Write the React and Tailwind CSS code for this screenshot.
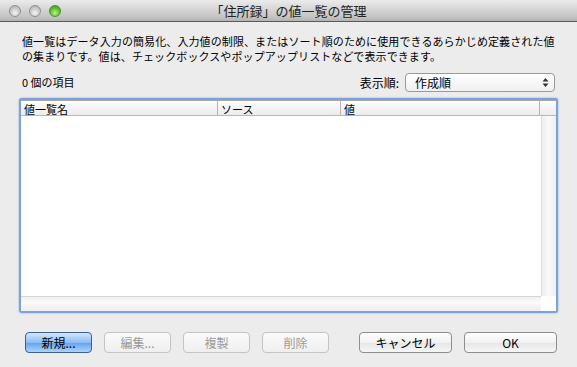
import React from 'react';

const font = { fontFamily: '"Lucida Grande", "Noto Sans CJK JP", "Liberation Sans", sans-serif' };

const TrafficLight = ({ green }) => (
  <span
    className={`block w-[12px] h-[12px] rounded-full border ${
      green
        ? 'border-[#4e8f2f] bg-[radial-gradient(circle_at_50%_70%,#b9f28a,#5cbf2a_55%,#3b8a1d)]'
        : 'border-[#8f8f8f] bg-[radial-gradient(circle_at_50%_70%,#f4f4f4,#c9c9c9_55%,#a9a9a9)]'
    }`}
  />
);

const Button = ({ children, w = 'w-[67px]', primary, disabled }) => (
  <button
    className={`${w} h-[21px] rounded-[4px] border text-[12px] leading-none flex items-center justify-center ${
      primary
        ? 'border-[#3f5f95] bg-[linear-gradient(#d2e6fd,#8cbdf4_50%,#62a2ee_51%,#a9d4fb)] text-black'
        : disabled
        ? 'border-[#c4c4c4] bg-[linear-gradient(#fafafa,#efefef)] text-[#9a9a9a]'
        : 'border-[#8e8e8e] bg-[linear-gradient(#ffffff,#f1f1f1_50%,#e6e6e6_51%,#f6f6f6)] text-black'
    }`}
  >
    {children}
  </button>
);

export default function App() {
  return (
    <div className="w-[577px] h-[367px] bg-[#ececec] flex flex-col overflow-hidden" style={font}>
      {/* title bar */}
      <div className="h-[22px] shrink-0 flex items-center relative bg-[linear-gradient(#ebebeb,#c4c4c4_80%,#b3b3b3)] border-b border-[#5a5a5a]">
        <div className="flex gap-[8px] pl-[9px]">
          <TrafficLight />
          <TrafficLight />
          <TrafficLight green />
        </div>
        <div className="absolute inset-0 flex items-center justify-center text-[13px] text-[#222]">
          「住所録」の値一覧の管理
        </div>
      </div>

      <div className="flex-1 flex flex-col px-[19px]">
        <p className="pl-[3px] pt-[12px] text-[11px] leading-[15px] text-black tracking-[0.1px]">
          値一覧はデータ入力の簡易化、入力値の制限、またはソート順のために使用できるあらかじめ定義された値
          <br />
          の集まりです。値は、チェックボックスやポップアップリストなどで表示できます。
        </p>

        <div className="flex items-center justify-between mt-[9px] pl-[3px] pr-[3px]">
          <span className="text-[11px]">0 個の項目</span>
          <div className="flex items-center gap-[6px]">
            <span className="text-[12px]">表示順:</span>
            <div className="w-[150px] h-[19px] rounded-[4px] border border-[#9a9a9a] bg-[linear-gradient(#ffffff,#f0f0f0)] flex items-center justify-between pl-[9px] pr-[5px]">
              <span className="text-[12px]">作成順</span>
              <svg width="7" height="11" viewBox="0 0 7 11">
                <path d="M3.5 1 L6.5 4.5 H0.5 Z" fill="#333" />
                <path d="M3.5 10 L6.5 6.5 H0.5 Z" fill="#333" />
              </svg>
            </div>
          </div>
        </div>

        {/* table */}
        <div className="mt-[6px] h-[215px] rounded-[3px] border-[2px] border-[#7ca3d8] shadow-[0_0_2px_#7ca3d8] bg-white flex flex-col">
          <div className="h-[16px] shrink-0 flex text-[11px] leading-[16px] bg-[linear-gradient(#fdfdfd,#ececec)] border-b border-[#b9b9b9] border-t border-t-[#a8a8a8]">
            <div className="w-[197px] pl-[3px] border-r border-[#b5b5b5]">値一覧名</div>
            <div className="w-[123px] pl-[3px] border-r border-[#b5b5b5]">ソース</div>
            <div className="w-[199px] pl-[3px] border-r border-[#b5b5b5]">値</div>
            <div className="flex-1" />
          </div>
          <div className="flex-1 flex">
            <div className="flex-1 flex flex-col">
              <div className="flex-1" />
              <div className="h-[15px] border-t border-[#d6d6d6] bg-[linear-gradient(#f0f0f0,#fbfbfb_40%,#ededed)]" />
            </div>
            <div className="w-[15px] flex flex-col">
              <div className="flex-1 border-l border-[#dedede] bg-[linear-gradient(90deg,#eeeeee,#fafafa_50%,#eeeeee)]" />
              <div className="h-[15px] bg-white" />
            </div>
          </div>
        </div>

        <div className="flex items-center mt-[19px] pl-[6px]">
          <div className="flex gap-[12px]">
            <Button primary>新規...</Button>
            <Button disabled>編集...</Button>
            <Button disabled>複製</Button>
            <Button disabled>削除</Button>
          </div>
          <div className="flex gap-[12px] ml-[30px]">
            <Button w="w-[93px]">キャンセル</Button>
            <Button w="w-[93px]">OK</Button>
          </div>
        </div>
      </div>
    </div>
  );
}
